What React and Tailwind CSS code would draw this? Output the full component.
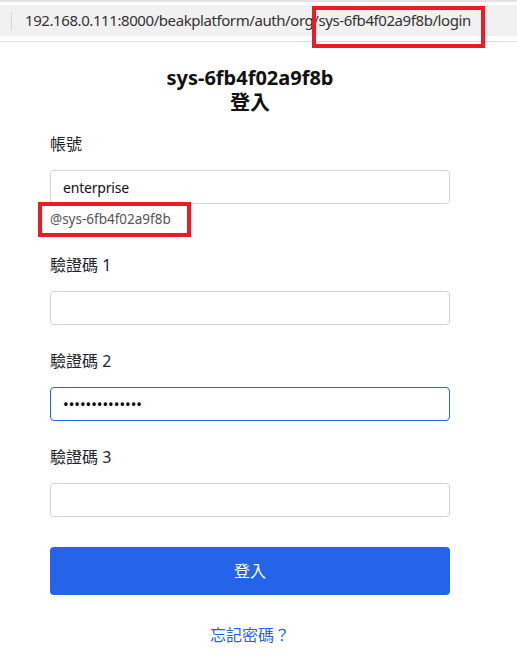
import React from 'react';

const font = { fontFamily: '"Noto Sans", "Noto Sans CJK TC", sans-serif' };

const Field = ({ label, children, help }) => (
  <div className="mt-6 first:mt-0">
    <label className="block text-[16px] leading-6 text-[#212529]">{label}</label>
    <div className="mt-3.5">{children}</div>
    {help}
  </div>
);

const App = () => {
  return (
    <div className="relative min-h-[666px] bg-white" style={font}>
      {/* Browser address bar */}
      <div className="h-[2px] bg-[#e3e3e3]"></div>
      <div className="mt-[3px] h-[31px] bg-[#f1f1f1] flex items-center">
        <div className="ml-[11px] w-px h-[18px] bg-[#d6d6d6]"></div>
        <span className="ml-[13px] text-[15px] text-[#333] tracking-[-0.42px]">
          192.168.0.111:8000/beakplatform/auth/org/sys-6fb4f02a9f8b/login
        </span>
      </div>
      <div className="mt-[5px] h-px bg-[#dcdcdc]"></div>

      {/* Login form */}
      <div className="ml-[50px] w-[400px] pt-[23px] pb-6">
        <div className="text-center font-bold text-[20px] leading-[25px] text-[#111]">
          <div>sys-6fb4f02a9f8b</div>
          <div>登入</div>
        </div>

        <div className="mt-[17px]">
          <Field
            label="帳號"
            help={<p className="mt-[5px] text-[13.5px] leading-5 text-[#555]">@sys-6fb4f02a9f8b</p>}
          >
            <input
              type="text"
              defaultValue="enterprise"
              className="w-full h-[34px] px-3 rounded border border-[#d1d5db] text-[14px] tracking-[-0.2px] text-[#111] outline-none"
            />
          </Field>
          <Field label="驗證碼 1">
            <input
              type="text"
              className="w-full h-[34px] px-3 rounded border border-[#d1d5db] text-[15px] outline-none"
            />
          </Field>
          <Field label="驗證碼 2">
            <input
              type="password"
              defaultValue="12345678901234"
              className="w-full h-[34px] px-3 rounded border border-[#2563eb] text-[15px] text-black outline-none"
            />
          </Field>
          <Field label="驗證碼 3">
            <input
              type="text"
              className="w-full h-[34px] px-3 rounded border border-[#d1d5db] text-[15px] outline-none"
            />
          </Field>
        </div>

        <button className="mt-[30px] w-full h-12 rounded bg-[#2563eb] text-white text-[16px]">登入</button>

        <div className="mt-7 text-center leading-6">
          <a href="#" className="text-[16px] text-[#2563eb]">忘記密碼？</a>
        </div>
      </div>

      {/* Annotation boxes */}
      <div className="absolute left-[312px] top-[6px] w-[173px] h-[42px] border-[4px] border-[#ed1c24]"></div>
      <div className="absolute left-[38px] top-[202px] w-[153px] h-[35px] border-[4px] border-[#ed1c24]"></div>
    </div>
  );
};

export default App;
